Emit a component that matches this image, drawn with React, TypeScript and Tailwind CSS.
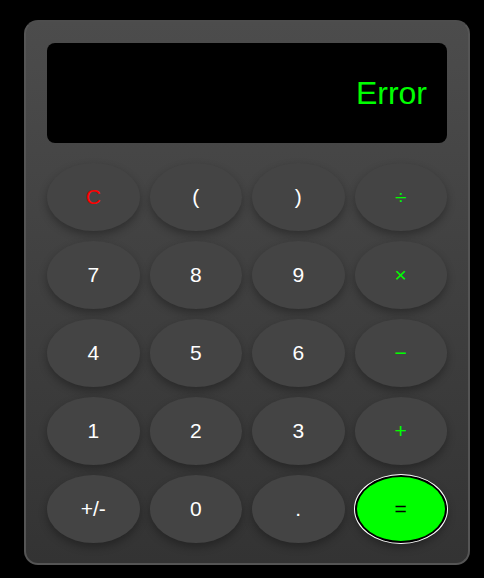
import { useState } from "react";

type Key = { label: string; kind: "clear" | "num" | "op" | "eq" };

const keys: Key[] = [
  { label: "C", kind: "clear" },
  { label: "(", kind: "num" },
  { label: ")", kind: "num" },
  { label: "÷", kind: "op" },
  { label: "7", kind: "num" },
  { label: "8", kind: "num" },
  { label: "9", kind: "num" },
  { label: "×", kind: "op" },
  { label: "4", kind: "num" },
  { label: "5", kind: "num" },
  { label: "6", kind: "num" },
  { label: "−", kind: "op" },
  { label: "1", kind: "num" },
  { label: "2", kind: "num" },
  { label: "3", kind: "num" },
  { label: "+", kind: "op" },
  { label: "+/-", kind: "num" },
  { label: "0", kind: "num" },
  { label: ".", kind: "num" },
  { label: "=", kind: "eq" },
];

export default function App() {
  const [display] = useState("Error");

  return (
    <div className="min-h-[578px] w-full bg-black pt-5 pl-6 font-['Liberation_Sans',Arial,sans-serif]">
      <div className="w-[446px] h-[545px] rounded-[14px] border-2 border-[#555] border-t-[#4d4d4d] bg-gradient-to-b from-[#4c4c4c] to-[#333] p-[21px]">
        {/* Display */}
        <div className="h-[100px] rounded-lg bg-black flex items-center justify-end pr-5">
          <span className="text-[32px] text-[#00ff00] leading-none">{display}</span>
        </div>

        {/* Keypad */}
        <div className="mt-5 grid grid-cols-4 gap-x-[10px] gap-y-[10px]">
          {keys.map((k) => (
            <button
              key={k.label}
              className={
                k.kind === "eq"
                  ? "h-[68px] rounded-[50%] bg-[#00ff00] text-black text-[21px] border-2 border-black outline outline-1 outline-white shadow-[0_4px_8px_rgba(0,0,0,0.35)]"
                  : k.kind === "clear"
                  ? "h-[68px] rounded-[50%] bg-[#444] text-[#ff0000] text-[21px] shadow-[0_4px_8px_rgba(0,0,0,0.3)]"
                  : k.kind === "op"
                  ? "h-[68px] rounded-[50%] bg-[#444] text-[#00ff00] text-[21px] shadow-[0_4px_8px_rgba(0,0,0,0.3)]"
                  : "h-[68px] rounded-[50%] bg-[#444] text-white text-[21px] shadow-[0_4px_8px_rgba(0,0,0,0.3)]"
              }
            >
              {k.label}
            </button>
          ))}
        </div>
      </div>
    </div>
  );
}
